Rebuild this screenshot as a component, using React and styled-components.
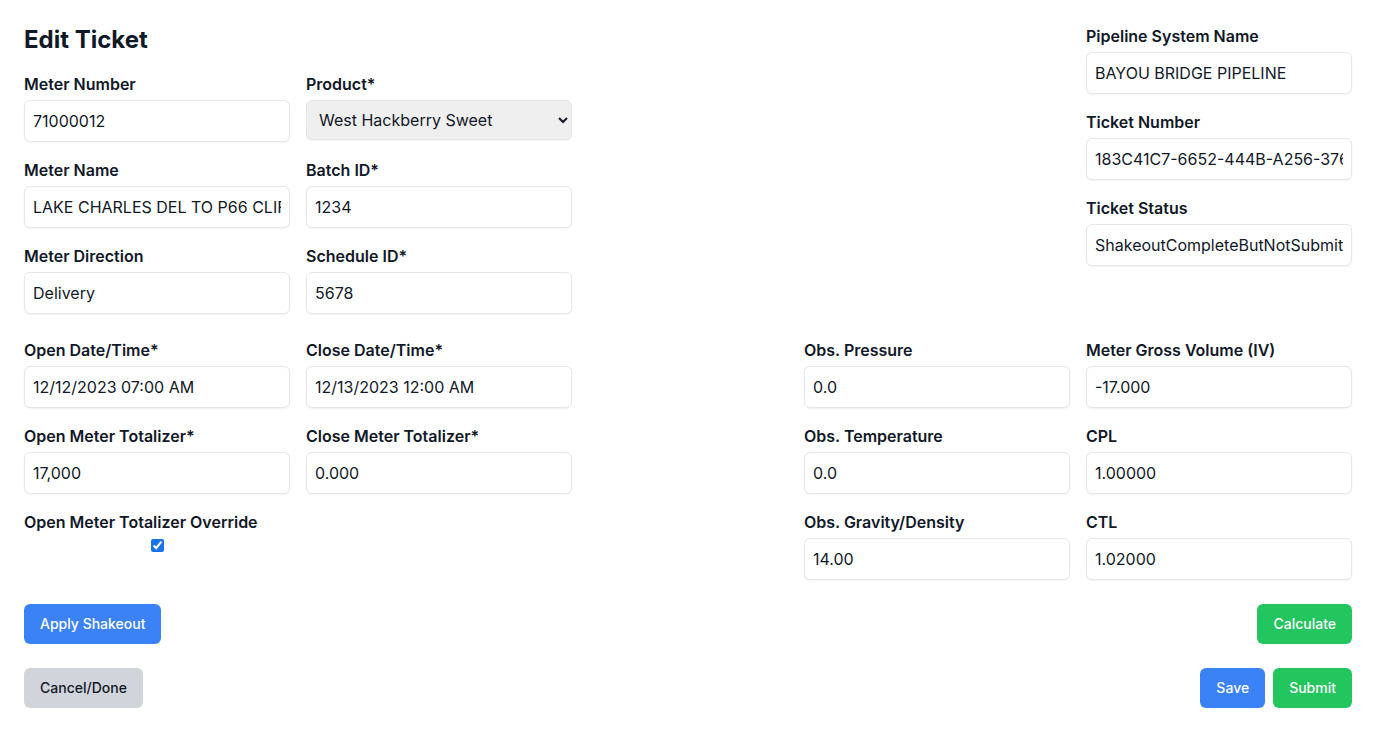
import React, { useState } from "react";
import styled, { createGlobalStyle } from "styled-components";

const GlobalStyle = createGlobalStyle`
  * {
    box-sizing: border-box;
  }
  body {
    margin: 0;
    background: #ffffff;
    color: #111827;
    font-family: Inter, "Noto Sans", sans-serif;
  }
`;

const Page = styled.main`
  padding: 24px;
  display: flex;
  flex-direction: column;
  gap: 24px;
`;

const Section = styled.div`
  display: flex;
  justify-content: space-between;
  align-items: flex-start;
`;

const Group = styled.div`
  display: flex;
  flex-direction: column;
`;

const Title = styled.h1`
  margin: 0 0 16px;
  font-size: 24px;
  line-height: 32px;
  font-weight: 700;
`;

const Grid = styled.div`
  display: grid;
  grid-template-columns: repeat(${(p) => p.$cols || 2}, 266px);
  column-gap: 16px;
  row-gap: 16px;
  align-items: start;
`;

const Field = styled.div`
  display: flex;
  flex-direction: column;
  gap: 4px;
  align-items: ${(p) => (p.$center ? "center" : "stretch")};
`;

const Label = styled.label`
  font-size: 16px;
  line-height: 24px;
  font-weight: 600;
  align-self: stretch;
`;

const Input = styled.input`
  width: 100%;
  height: 42px;
  padding: 8px;
  font-family: inherit;
  font-size: 16px;
  line-height: 24px;
  color: #111827;
  background: #fff;
  border: 1px solid #e5e7eb;
  border-radius: 6px;
  box-shadow: 0 1px 2px rgba(0, 0, 0, 0.05);
  outline: none;
`;

const Select = styled.select`
  width: 100%;
  height: 40px;
  padding: 0 6px 0 8px;
  font-family: inherit;
  font-size: 16px;
  color: #111827;
  background: #efefef;
  border: 1px solid #e5e7eb;
  border-radius: 6px;
  box-shadow: 0 1px 2px rgba(0, 0, 0, 0.05);
`;

const Check = styled.input`
  margin: 1px 0 0;
  width: 13px;
  height: 13px;
  accent-color: #1a73e8;
`;

const ButtonRow = styled.div`
  display: flex;
  justify-content: space-between;
  align-items: center;
`;

const ButtonGroup = styled.div`
  display: flex;
  gap: 8px;
`;

const colors = {
  blue: { bg: "#3b82f6", fg: "#ffffff" },
  green: { bg: "#22c55e", fg: "#ffffff" },
  gray: { bg: "#d1d5db", fg: "#111827" },
};

const Button = styled.button`
  height: 40px;
  padding: 0 16px;
  font-family: inherit;
  font-size: 14px;
  font-weight: 500;
  line-height: 20px;
  border: none;
  border-radius: 6px;
  cursor: pointer;
  background: ${(p) => colors[p.$variant].bg};
  color: ${(p) => colors[p.$variant].fg};
`;

const TextField = ({ label, value }) => (
  <Field>
    <Label>{label}</Label>
    <Input type="text" defaultValue={value} />
  </Field>
);

const App = () => {
  const [override, setOverride] = useState(true);

  return (
    <>
      <GlobalStyle />
      <Page>
        <Section>
          <Group>
            <Title>Edit Ticket</Title>
            <Grid>
              <TextField label="Meter Number" value="71000012" />
              <Field>
                <Label>Product*</Label>
                <Select defaultValue="whs">
                  <option value="whs">West Hackberry Sweet</option>
                  <option value="whh">West Hackberry Heavy</option>
                </Select>
              </Field>
              <TextField
                label="Meter Name"
                value="LAKE CHARLES DEL TO P66 CLIFTON RIDGE"
              />
              <TextField label="Batch ID*" value="1234" />
              <TextField label="Meter Direction" value="Delivery" />
              <TextField label="Schedule ID*" value="5678" />
            </Grid>
          </Group>
          <Grid $cols={1}>
            <TextField label="Pipeline System Name" value="BAYOU BRIDGE PIPELINE" />
            <TextField
              label="Ticket Number"
              value="183C41C7-6652-444B-A256-3760E1F2B9A1"
            />
            <TextField label="Ticket Status" value="ShakeoutCompleteButNotSubmitted" />
          </Grid>
        </Section>

        <Section>
          <Grid>
            <TextField label="Open Date/Time*" value="12/12/2023 07:00 AM" />
            <TextField label="Close Date/Time*" value="12/13/2023 12:00 AM" />
            <TextField label="Open Meter Totalizer*" value="17,000" />
            <TextField label="Close Meter Totalizer*" value="0.000" />
            <Field $center>
              <Label>Open Meter Totalizer Override</Label>
              <Check
                type="checkbox"
                checked={override}
                onChange={(e) => setOverride(e.target.checked)}
              />
            </Field>
          </Grid>
          <Grid>
            <TextField label="Obs. Pressure" value="0.0" />
            <TextField label="Meter Gross Volume (IV)" value="-17.000" />
            <TextField label="Obs. Temperature" value="0.0" />
            <TextField label="CPL" value="1.00000" />
            <TextField label="Obs. Gravity/Density" value="14.00" />
            <TextField label="CTL" value="1.02000" />
          </Grid>
        </Section>

        <ButtonRow>
          <Button $variant="blue">Apply Shakeout</Button>
          <Button $variant="green">Calculate</Button>
        </ButtonRow>

        <ButtonRow>
          <Button $variant="gray">Cancel/Done</Button>
          <ButtonGroup>
            <Button $variant="blue">Save</Button>
            <Button $variant="green">Submit</Button>
          </ButtonGroup>
        </ButtonRow>
      </Page>
    </>
  );
};

export default App;
